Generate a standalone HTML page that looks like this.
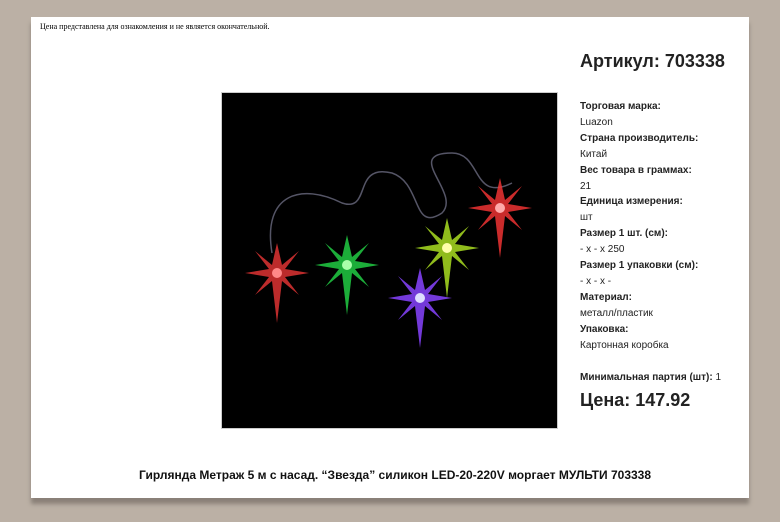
<!DOCTYPE html>
<html><head><meta charset="utf-8"><style>
body{margin:0;width:780px;height:522px;background:#bbb0a5;position:relative;overflow:hidden;font-family:"Liberation Sans",Arial,sans-serif;color:#222}
.page{position:absolute;left:31px;top:17px;width:718px;height:481px;background:#fff;box-shadow:0 6px 4px #8a8078}
.note{position:absolute;left:40px;top:22px;font-family:"Liberation Serif",serif;font-size:8px;color:#000}
.art{position:absolute;left:580px;top:51px;font-size:18px;font-weight:bold;color:#222}
.col{position:absolute;left:580px;top:99px;font-size:10px;line-height:15.9px}
.col b{display:block}
.min{position:absolute;left:580px;top:372px;font-size:10px;font-weight:bold}
.min span{font-weight:normal}
.price{position:absolute;left:580px;top:390px;font-size:18px;font-weight:bold}
.img{position:absolute;left:222px;top:93px;width:335px;height:335px;background:#000;outline:1px solid #ccc}
.title{position:absolute;left:31px;width:728px;top:468px;text-align:center;font-size:12px;font-weight:bold;color:#111}
</style></head><body>
<div class="page"></div>
<div class="note">Цена представлена для ознакомления и не является окончательной.</div>
<div class="art">Артикул: 703338</div>
<div class="col">
<b>Торговая марка:</b>Luazon
<b>Страна производитель:</b>Китай
<b>Вес товара в граммах:</b>21
<b>Единица измерения:</b>шт
<b>Размер 1 шт. (см):</b>- x - x 250
<b>Размер 1 упаковки (см):</b>- x - x -
<b>Материал:</b>металл/пластик
<b>Упаковка:</b>Картонная коробка
</div>
<div class="min">Минимальная партия (шт): <span>1</span></div>
<div class="price">Цена: 147.92</div>
<div class="img">
<svg width="335" height="335" viewBox="0 0 335 335">
<defs>
<polygon id="s" points="0,-30 5,-8 22,-22 8,-4 32,0 8,4 22,22 5,8 0,50 -5,8 -22,22 -8,4 -32,0 -8,-4 -22,-22 -5,-8"/>
</defs>
<g fill="none" stroke="#556" stroke-width="1.5">
<path d="M50 160 C40 100 80 90 120 110 C150 120 130 70 170 80 C200 90 190 140 220 120 C240 100 180 60 230 60 C260 60 250 110 290 90"/>
</g>
<g opacity="0.85">
<use href="#s" x="55" y="180" fill="#d33"/>
<use href="#s" x="125" y="172" fill="#2c4"/>
<use href="#s" x="198" y="205" fill="#84f"/>
<use href="#s" x="225" y="155" fill="#ad2"/>
<use href="#s" x="278" y="115" fill="#e33"/>
</g>
<circle cx="55" cy="180" r="5" fill="#f88"/><circle cx="125" cy="172" r="5" fill="#afa"/><circle cx="198" cy="205" r="5" fill="#ddf"/><circle cx="225" cy="155" r="5" fill="#ffa"/><circle cx="278" cy="115" r="5" fill="#faa"/>
</svg>
</div>
<div class="title">Гирлянда Метраж 5 м с насад. “Звезда” силикон LED-20-220V моргает МУЛЬТИ 703338</div>
</body></html>
